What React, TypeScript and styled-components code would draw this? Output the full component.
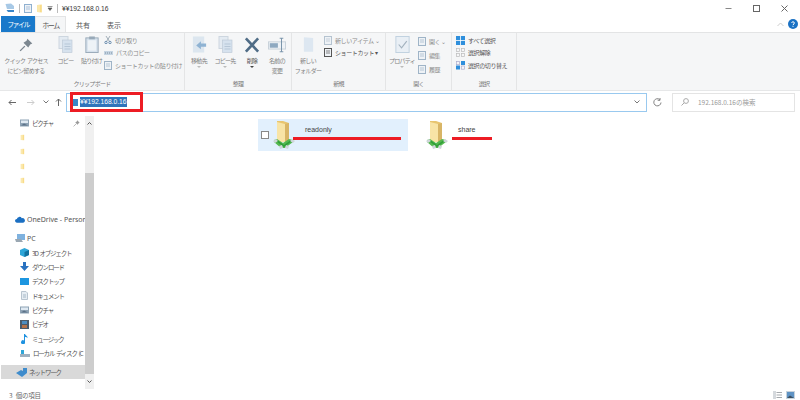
import React, { FC } from 'react';
import styled, { createGlobalStyle } from 'styled-components';

const GlobalStyle = createGlobalStyle`
  html, body { margin: 0; padding: 0; background: #fff; }
  body { font-family: "Noto Sans CJK JP", "Liberation Sans", sans-serif; overflow: hidden; }
  svg { flex: none; }
`;

const Win = styled.div`
  width: 800px;
  height: 400px;
  display: flex;
  flex-direction: column;
  position: relative;
  overflow: hidden;
  color: #444;
`;

const TitleBar = styled.div`
  height: 16px;
  flex: none;
  display: flex;
  align-items: center;
  padding-left: 5px;
  gap: 4px;
  font-size: 8px;
  color: #333;
`;
const TitleText = styled.span`
  font-family: "Liberation Sans", "Noto Sans CJK JP", sans-serif;
  font-size: 6.7px;
`;
const Sep = styled.span`
  width: 1px;
  height: 9px;
  background: #bbb;
`;
const WinButtons = styled.div`
  margin-left: auto;
  display: flex;
  gap: 21px;
  padding-right: 12px;
  align-items: center;
`;

const TabRow = styled.div`
  height: 16px;
  flex: none;
  display: flex;
  align-items: stretch;
`;
const FileTab = styled.div`
  width: 34px;
  margin-left: 1px;
  background: #1979ca;
  color: #fff;
  font-size: 7px;
  letter-spacing: -1.6px;
  display: flex;
  align-items: center;
  justify-content: center;
`;
const Tab = styled.div<{ $active?: boolean; $w: number; $narrow?: boolean }>`
  width: ${p => p.$w}px;
  font-size: 7px;
  letter-spacing: ${p => (p.$narrow ? '-1.4px' : '0')};
  display: flex;
  align-items: center;
  justify-content: center;
  color: #555;
  background: ${p => (p.$active ? '#f5f6f7' : 'transparent')};
  border: 1px solid ${p => (p.$active ? '#e3e4e5' : 'transparent')};
  border-bottom: none;
  box-sizing: border-box;
`;
const TabRight = styled.div`
  margin-left: auto;
  display: flex;
  align-items: center;
  gap: 4px;
  padding-right: 2px;
`;

const Ribbon = styled.div`
  height: 59px;
  flex: none;
  background: #f5f6f7;
  border-top: 1px solid #e3e4e5;
  border-bottom: 1px solid #e6e7e8;
  display: flex;
  box-sizing: border-box;
`;
const Group = styled.div<{ $w: number }>`
  width: ${p => p.$w}px;
  flex: none;
  border-right: 1px solid #e4e5e6;
  display: flex;
  flex-direction: column;
  box-sizing: border-box;
`;
const GroupBody = styled.div`
  flex: 1;
  display: flex;
  min-height: 0;
  padding-top: 2px;
`;
const GroupLabel = styled.div`
  height: 12px;
  font-size: 6px;
  letter-spacing: -0.7px;
  line-height: 12px;
  text-align: center;
  color: #777;
`;
const BigButton = styled.div<{ $w: number; $dark?: boolean }>`
  width: ${p => p.$w}px;
  flex: none;
  padding-top: 1px;
  display: flex;
  flex-direction: column;
  align-items: center;
  font-size: 6px;
  letter-spacing: -0.7px;
  word-spacing: 1px;
  line-height: 9.5px;
  text-align: center;
  color: ${p => (p.$dark ? '#555' : '#808080')};
  gap: 3px;
  white-space: nowrap;
`;
const IconSlot = styled.div`
  height: 17px;
  flex: none;
  display: flex;
  align-items: center;
  justify-content: center;
`;
const Caret = styled.span<{ $dark?: boolean }>`
  width: 0;
  height: 0;
  margin-top: -3px;
  border-left: 2px solid transparent;
  border-right: 2px solid transparent;
  border-top: 2px solid ${p => (p.$dark ? '#444' : '#bbb')};
`;
const SmallColumn = styled.div<{ $gap?: number; $top?: number; $left?: number }>`
  display: flex;
  flex-direction: column;
  gap: ${p => p.$gap ?? 2.5}px;
  padding-top: ${p => p.$top ?? 0}px;
  padding-left: ${p => p.$left ?? 0}px;
`;
const SmallButton = styled.div<{ $dark?: boolean }>`
  height: 10px;
  display: flex;
  align-items: center;
  gap: 3px;
  font-size: 6px;
  letter-spacing: -0.4px;
  white-space: nowrap;
  color: ${p => (p.$dark ? '#555' : '#8a8a8a')};
`;

const AddressRow = styled.div`
  height: 22px;
  flex: none;
  display: flex;
  align-items: center;
  padding-left: 8px;
`;
const NavIcons = styled.div`
  width: 58px;
  flex: none;
  display: grid;
  grid-template-columns: 19px 16px 12px auto;
  align-items: center;
`;
const AddressBox = styled.div`
  width: 581px;
  height: 19px;
  flex: none;
  box-sizing: border-box;
  border: 1px solid #99c9ef;
  display: flex;
  align-items: center;
  padding: 0 6px;
  gap: 2px;
`;
const AddressText = styled.span`
  background: #2f74bb;
  color: #fff;
  font-family: "Liberation Sans", sans-serif;
  font-size: 6.7px;
  line-height: 10px;
`;
const RefreshBox = styled.div`
  width: 24px;
  flex: none;
  box-sizing: border-box;
  padding-right: 4px;
  display: flex;
  justify-content: center;
`;
const SearchBox = styled.div`
  width: 123px;
  height: 19px;
  flex: none;
  margin-left: 1px;
  box-sizing: border-box;
  border: 1px solid #e4e4e4;
  display: flex;
  align-items: center;
  padding-left: 8px;
  gap: 9px;
  font-size: 6.5px;
  color: #9a9a9a;
`;

const Body = styled.div`
  flex: 1;
  min-height: 0;
  display: flex;
  padding-top: 3px;
`;
const Sidebar = styled.div`
  width: 85px;
  flex: none;
  overflow: hidden;
  display: flex;
  flex-direction: column;
`;
const NavItem = styled.div<{ $depth: number; $selected?: boolean; $latin?: boolean }>`
  height: 14.4px;
  flex: none;
  display: flex;
  align-items: center;
  gap: ${p => (p.$depth ? 3 : 2)}px;
  padding-left: ${p => (p.$depth ? 20 : 15)}px;
  margin-left: ${p => (p.$selected ? 1 : 0)}px;
  font-family: ${p => (p.$latin ? '"Noto Sans", sans-serif' : 'inherit')};
  font-size: ${p => (p.$latin ? 7 : 6.5)}px;
  letter-spacing: ${p => (p.$latin ? '0' : '-1.2px')};
  word-spacing: ${p => (p.$latin ? '0' : '1.5px')};
  color: #555;
  white-space: nowrap;
  background: ${p => (p.$selected ? '#d9d9d9' : 'transparent')};
`;
const NavGap = styled.div<{ $h: number }>`
  height: ${p => p.$h}px;
  flex: none;
`;
const PinIcon = styled.span`
  margin-left: auto;
  margin-right: 5px;
  display: flex;
`;
const ScrollBar = styled.div`
  width: 9px;
  flex: none;
  background: #f0f0f0;
  display: flex;
  flex-direction: column;
  align-items: center;
`;
const ScrollCap = styled.div`
  height: 15px;
  flex: none;
  display: flex;
  align-items: center;
  justify-content: center;
`;
const ScrollTrack = styled.div`
  flex: 1;
  width: 100%;
  display: flex;
  flex-direction: column;
`;
const ScrollThumb = styled.div`
  flex: 1;
  margin-top: 42px;
  background: #cdcdcd;
`;

const Content = styled.div`
  flex: 1;
  display: flex;
  align-items: flex-start;
  padding: 3px 0 0 164px;
`;
const ShareItem = styled.div<{ $selected?: boolean; $w: number; $inset?: number }>`
  width: ${p => p.$w}px;
  height: 32px;
  flex: none;
  box-sizing: border-box;
  padding-left: ${p => p.$inset ?? 0}px;
  display: flex;
  align-items: center;
  position: relative;
  background: ${p => (p.$selected ? '#e2f0fd' : 'transparent')};
`;
const CheckBox = styled.span`
  width: 8px;
  height: 8px;
  flex: none;
  margin: 0 4px 0 3px;
  box-sizing: border-box;
  border: 1px solid #888;
  background: #fff;
`;
const ShareLabel = styled.span`
  font-family: "Liberation Sans", sans-serif;
  font-size: 7px;
  color: #444;
  align-self: flex-start;
  margin: 7px 0 0 10px;
`;
const RedUnderline = styled.div<{ $left: number; $w: number }>`
  position: absolute;
  left: ${p => p.$left}px;
  top: 18px;
  width: ${p => p.$w}px;
  height: 3px;
  background: #ed1c24;
`;

const StatusBar = styled.div`
  height: 11px;
  flex: none;
  display: flex;
  align-items: center;
  padding: 0 5px 0 9px;
  font-size: 6.5px;
  letter-spacing: -0.2px;
  word-spacing: 2px;
  color: #666;
`;
const ViewIcons = styled.div`
  margin-left: auto;
  display: flex;
  align-items: center;
  gap: 4px;
`;

const RedMark = styled.div`
  position: absolute;
  left: 70px;
  top: 92px;
  width: 73px;
  height: 20px;
  box-sizing: border-box;
  border: 3px solid #ed1c24;
`;

const Folder: FC<{ size?: number }> = ({ size = 9 }) => (
  <svg width={size} height={size + 2} viewBox="0 0 9 11">
    <path d="M1.5 1 L7.5 0.5 V10.5 L1.5 10 Z" fill="#f8dc8a" />
    <path d="M1.5 1 L5 1 V10 H1.5 Z" fill="#fbe9ae" />
  </svg>
);

const NetFolder: FC = () => (
  <svg width="22" height="30" viewBox="0 0 22 30">
    <path d="M4 1 H10 L16 3 V21 H4 Z" fill="#e8c56f" />
    <path d="M4 2 L12 4 V22 H4 Z" fill="#f8e4a6" />
    <path d="M12 4 L16 3 V21 L12 22 Z" fill="#d8b566" />
    <path d="M1 20 L4 19 L10 23 L16 19 L20 20 L20 22 L12 28 L8 28 L1 22 Z" fill="#55b84f" />
    <path d="M4 20 L11 25 L18 20 L19 21 L11 27 L3 21 Z" fill="#2f9e38" />
    <path d="M0 21 L3 19 L5 21 L2 23 Z" fill="#cfd6da" />
    <path d="M19 19 L22 21 L20 23 L17 21 Z" fill="#cfd6da" />
    <path d="M6 26 L9 25 L10 28 L7 29 Z" fill="#cfd6da" />
    <path d="M13 25 L16 26 L15 29 L12 28 Z" fill="#cfd6da" />
  </svg>
);

const Pin: FC<{ size?: number; color?: string }> = ({ size = 7, color = '#9a9a9a' }) => (
  <svg width={size} height={size} viewBox="0 0 10 10">
    <path d="M6 0.5 L9.5 4 L8 4.6 L6.6 6.8 L3.2 3.4 L5.4 2 Z" fill={color} />
    <path d="M4.2 5.8 L0.8 9.2" stroke={color} strokeWidth="1" />
  </svg>
);

const Doc: FC = () => (
  <svg width="15" height="17" viewBox="0 0 14 17">
    <rect x="0.5" y="0.5" width="9" height="12" fill="#e4ebf2" stroke="#cdd6df" />
    <rect x="4" y="4" width="9.5" height="12.5" fill="#d6e2ee" stroke="#b9c7d4" strokeWidth="0.6" />
    <path d="M6 8H12M6 10.5H12M6 13H12" stroke="#a9bccd" strokeWidth="0.7" />
  </svg>
);

const Clipboard: FC = () => (
  <svg width="14" height="17" viewBox="0 0 14 18">
    <rect x="0.5" y="2" width="13" height="15.5" fill="#d5e1ec" stroke="#98a9b8" />
    <rect x="2.5" y="4.5" width="9" height="11" fill="#eef3f7" />
    <rect x="4" y="0.5" width="6" height="3" fill="#98a9b8" />
  </svg>
);

const Mini: FC<{ color?: string; kind?: 'cut' | 'bar' | 'doc' | 'grid' | 'dots' | 'swap' }> = ({ color = '#9fb4c7', kind = 'doc' }) => {
  if (kind === 'cut') {
    return (
      <svg width="8" height="8" viewBox="0 0 8 8">
        <path d="M2 0 L5.5 5.5M6 0 L2.5 5.5" stroke="#9aa7b2" strokeWidth="0.9" />
        <circle cx="2" cy="6.5" r="1.2" fill="none" stroke="#6d8fb0" />
        <circle cx="6" cy="6.5" r="1.2" fill="none" stroke="#6d8fb0" />
      </svg>
    );
  }
  if (kind === 'bar') {
    return (
      <svg width="9" height="8" viewBox="0 0 9 8">
        <rect x="0" y="2" width="9" height="4" fill="#c5d4e2" />
        <path d="M1 4H8" stroke="#7d8f9f" strokeDasharray="1 1" />
      </svg>
    );
  }
  if (kind === 'grid') {
    return (
      <svg width="9" height="9" viewBox="0 0 9 9">
        <rect width="9" height="9" fill="#2f8fdc" />
        <path d="M4.5 0V9M0 4.5H9" stroke="#fff" strokeWidth="0.8" />
      </svg>
    );
  }
  if (kind === 'dots') {
    return (
      <svg width="9" height="9" viewBox="0 0 9 9">
        <rect x="0.5" y="0.5" width="3" height="3" fill="none" stroke="#bbb" strokeWidth="0.7" />
        <rect x="5.5" y="0.5" width="3" height="3" fill="none" stroke="#bbb" strokeWidth="0.7" />
        <rect x="0.5" y="5.5" width="3" height="3" fill="none" stroke="#bbb" strokeWidth="0.7" />
        <rect x="5.5" y="5.5" width="3" height="3" fill="none" stroke="#bbb" strokeWidth="0.7" />
      </svg>
    );
  }
  if (kind === 'swap') {
    return (
      <svg width="9" height="9" viewBox="0 0 9 9">
        <rect x="0" y="4.5" width="4" height="4" fill="#2f8fdc" />
        <rect x="5" y="0" width="4" height="4" fill="#2f8fdc" />
        <rect x="5.3" y="5" width="3.2" height="3.2" fill="none" stroke="#aac" strokeWidth="0.7" />
        <rect x="0.3" y="0.5" width="3.2" height="3.2" fill="none" stroke="#aac" strokeWidth="0.7" />
      </svg>
    );
  }
  return (
    <svg width="8" height="9" viewBox="0 0 8 9">
      <rect x="0.5" y="0.5" width="7" height="8" fill="#eef2f6" stroke={color} />
      <path d="M2 3H6M2 5H6" stroke={color} strokeWidth="0.7" />
    </svg>
  );
};

const PictureIcon: FC = () => (
  <svg width="9" height="8" viewBox="0 0 9 8">
    <rect width="9" height="7" y="0.5" fill="#8ea3b5" />
    <rect x="1" y="1.5" width="7" height="2.5" fill="#dfe9f2" />
    <path d="M1 6.5L4 4.5L8 6.5Z" fill="#5b7288" />
  </svg>
);

const App: FC = () => (
  <>
    <GlobalStyle />
    <Win>
      <TitleBar>
        <svg width="10" height="10" viewBox="0 0 10 10">
          <path d="M0.5 1 L6 0.5 L9 3 V6 H2 Z" fill="#a8c9e6" />
          <path d="M1.5 7 H9 V9 H3 Z" fill="#3a86c8" />
        </svg>
        <Sep />
        <Mini color="#8fb0d0" />
        <Folder size={7} />
        <svg width="6" height="5" viewBox="0 0 6 5"><path d="M0.5 0.5H5.5M1 2L3 4.5L5 2Z" stroke="#555" strokeWidth="0.6" fill="#555" /></svg>
        <Sep />
        <TitleText>¥¥192.168.0.16</TitleText>
        <WinButtons>
          <svg width="7" height="7" viewBox="0 0 7 7"><path d="M0.5 3.5H6.5" stroke="#888" /></svg>
          <svg width="7" height="7" viewBox="0 0 7 7"><rect x="0.5" y="0.5" width="6" height="6" fill="none" stroke="#666" /></svg>
          <svg width="7" height="7" viewBox="0 0 7 7"><path d="M0.5 0.5L6.5 6.5M6.5 0.5L0.5 6.5" stroke="#666" /></svg>
        </WinButtons>
      </TitleBar>
      <TabRow>
        <FileTab>ファイル</FileTab>
        <Tab $active $w={31} $narrow>ホーム</Tab>
        <Tab $w={34}>共有</Tab>
        <Tab $w={28}>表示</Tab>
        <TabRight>
          <svg width="7" height="5" viewBox="0 0 7 5"><path d="M0.5 4L3.5 1L6.5 4" fill="none" stroke="#ccc" /></svg>
          <svg width="10" height="10" viewBox="0 0 10 10">
            <circle cx="5" cy="5" r="5" fill="#1b72c4" />
            <path d="M3.6 3.8C3.8 2.4 6.4 2.5 6.4 4C6.4 5 5 5 5 6.2M5 7.2V8" fill="none" stroke="#fff" strokeWidth="1" />
          </svg>
        </TabRight>
      </TabRow>
      <Ribbon>
        <Group $w={185}>
          <GroupBody>
            <BigButton $w={52}>
              <IconSlot><Pin size={14} color="#7c8790" /></IconSlot>
              <span>クイック アクセス<br />にピン留めする</span>
            </BigButton>
            <BigButton $w={27}>
              <IconSlot><Doc /></IconSlot>
              <span>コピー</span>
            </BigButton>
            <BigButton $w={25}>
              <IconSlot><Clipboard /></IconSlot>
              <span>貼り付け</span>
            </BigButton>
            <SmallColumn>
              <SmallButton><Mini kind="cut" />切り取り</SmallButton>
              <SmallButton><Mini kind="bar" />パスのコピー</SmallButton>
              <SmallButton><Mini />ショートカットの貼り付け</SmallButton>
            </SmallColumn>
          </GroupBody>
          <GroupLabel>クリップボード</GroupLabel>
        </Group>
        <Group $w={107}>
          <GroupBody>
            <BigButton $w={28}>
              <IconSlot>
                <svg width="15" height="17" viewBox="0 0 15 18">
                  <rect x="0.5" y="0.5" width="12" height="17" fill="#dce6ef" />
                  <path d="M14.5 8H9V5.5L4 10L9 14V11.5H14.5Z" fill="#8fb3d3" />
                </svg>
              </IconSlot>
              <span>移動先</span>
              <Caret />
            </BigButton>
            <BigButton $w={24}>
              <IconSlot><Doc /></IconSlot>
              <span>コピー先</span>
              <Caret />
            </BigButton>
            <BigButton $w={30} $dark>
              <IconSlot>
                <svg width="16" height="16" viewBox="0 0 16 17">
                  <path d="M1.5 1.5L14.5 15.5M14.5 1.5L1.5 15.5" stroke="#4f6c86" strokeWidth="2.8" />
                </svg>
              </IconSlot>
              <span>削除</span>
              <Caret $dark />
            </BigButton>
            <BigButton $w={20}>
              <IconSlot>
                <svg width="18" height="16" viewBox="0 0 20 17">
                  <rect x="0.5" y="5" width="19" height="8" fill="#eef2f6" stroke="#c5cfd8" />
                  <rect x="2" y="6.5" width="9" height="5" fill="#8ea9c0" />
                  <path d="M13 1H17M15 1V16M13 16H17" stroke="#6d8aa3" />
                </svg>
              </IconSlot>
              <span>名前の<br />変更</span>
            </BigButton>
          </GroupBody>
          <GroupLabel>整理</GroupLabel>
        </Group>
        <Group $w={94}>
          <GroupBody>
            <BigButton $w={32}>
              <IconSlot>
                <svg width="11" height="17" viewBox="0 0 12 18">
                  <path d="M1 1L11 2V17H1Z" fill="#dde7f1" />
                </svg>
              </IconSlot>
              <span>新しい<br />フォルダー</span>
            </BigButton>
            <SmallColumn>
              <SmallButton><Mini color="#b5c3d0" />新しいアイテム ⌄</SmallButton>
              <SmallButton $dark><Mini color="#555" />ショートカット ▾</SmallButton>
            </SmallColumn>
          </GroupBody>
          <GroupLabel>新規</GroupLabel>
        </Group>
        <Group $w={66}>
          <GroupBody>
            <BigButton $w={32}>
              <IconSlot>
                <svg width="15" height="17" viewBox="0 0 15 18">
                  <rect x="0.5" y="0.5" width="14" height="17" fill="#e9eff5" stroke="#bfd0df" />
                  <path d="M3.5 9L6.5 12.5L12 5.5" fill="none" stroke="#a3b2be" strokeWidth="1.2" />
                </svg>
              </IconSlot>
              <span>プロパティ</span>
              <Caret />
            </BigButton>
            <SmallColumn $gap={4} $top={1}>
              <SmallButton><Mini />開く ⌄</SmallButton>
              <SmallButton><Mini />編集</SmallButton>
              <SmallButton><Mini />履歴</SmallButton>
            </SmallColumn>
          </GroupBody>
          <GroupLabel>開く</GroupLabel>
        </Group>
        <Group $w={65}>
          <GroupBody>
            <SmallColumn $left={4}>
              <SmallButton $dark><Mini kind="grid" />すべて選択</SmallButton>
              <SmallButton $dark><Mini kind="dots" />選択解除</SmallButton>
              <SmallButton $dark><Mini kind="swap" />選択の切り替え</SmallButton>
            </SmallColumn>
          </GroupBody>
          <GroupLabel>選択</GroupLabel>
        </Group>
      </Ribbon>
      <AddressRow>
        <NavIcons>
          <svg width="8" height="7" viewBox="0 0 8 7"><path d="M8 3.5H1M3.5 1L1 3.5L3.5 6" fill="none" stroke="#666" /></svg>
          <svg width="8" height="7" viewBox="0 0 8 7"><path d="M0 3.5H7M4.5 1L7 3.5L4.5 6" fill="none" stroke="#ccc" /></svg>
          <svg width="6" height="4" viewBox="0 0 6 4"><path d="M0.5 0.5L3 3L5.5 0.5" fill="none" stroke="#777" /></svg>
          <svg width="7" height="8" viewBox="0 0 7 8"><path d="M3.5 8V1M1 3.5L3.5 1L6 3.5" fill="none" stroke="#666" /></svg>
        </NavIcons>
        <AddressBox>
          <svg width="5" height="7" viewBox="0 0 5 7"><rect width="5" height="7" fill="#3a86c8" /></svg>
          <AddressText>¥¥192.168.0.16</AddressText>
          <svg style={{ marginLeft: 'auto' }} width="6" height="4" viewBox="0 0 6 4"><path d="M0.5 0.5L3 3L5.5 0.5" fill="none" stroke="#777" /></svg>
        </AddressBox>
        <RefreshBox>
          <svg width="9" height="9" viewBox="0 0 9 9"><path d="M6.8 1.6A3.6 3.6 0 1 0 8 4.5M7 0V2.3H4.7" fill="none" stroke="#777" strokeWidth="0.9" /></svg>
        </RefreshBox>
        <SearchBox>
          <svg width="8" height="8" viewBox="0 0 8 8"><circle cx="5" cy="3" r="2.4" fill="none" stroke="#aaa" /><path d="M3.2 4.8L0.5 7.5" stroke="#aaa" /></svg>
          <span>192.168.0.16の検索</span>
        </SearchBox>
      </AddressRow>
      <Body>
        <Sidebar>
          <NavItem $depth={1}><PictureIcon />ピクチャ<PinIcon><Pin /></PinIcon></NavItem>
          <NavItem $depth={1}><Folder size={5} /></NavItem>
          <NavItem $depth={1}><Folder size={5} /></NavItem>
          <NavItem $depth={1}><Folder size={5} /></NavItem>
          <NavItem $depth={1}><Folder size={5} /></NavItem>
          <NavGap $h={24} />
          <NavItem $depth={0} $latin>
            <svg width="10" height="7" viewBox="0 0 11 7"><path d="M2 7A2 2 0 0 1 2 3A3 3 0 0 1 7.5 2A2.5 2.5 0 0 1 9 7Z" fill="#1b6fc2" /></svg>
            OneDrive - Person
          </NavItem>
          <NavGap $h={4.6} />
          <NavItem $depth={0} $latin>
            <svg width="10" height="9" viewBox="0 0 10 9"><rect x="2" y="0" width="8" height="6" fill="#7fb2df" /><path d="M0 5H6L8 8H1Z" fill="#9aa7b2" /></svg>
            PC
          </NavItem>
          <NavItem $depth={1}>
            <svg width="9" height="9" viewBox="0 0 9 9"><path d="M4.5 0L9 2V7L4.5 9L0 7V2Z" fill="#2ea6d8" /><path d="M4.5 4V9L9 7V2Z" fill="#12729f" /></svg>
            3D オブジェクト
          </NavItem>
          <NavItem $depth={1}>
            <svg width="9" height="9" viewBox="0 0 9 9"><path d="M3 0H6V4H9L4.5 9L0 4H3Z" fill="#2a72c0" /></svg>
            ダウンロード
          </NavItem>
          <NavItem $depth={1}>
            <svg width="9" height="7" viewBox="0 0 9 7"><rect width="9" height="7" fill="#1d96e0" /></svg>
            デスクトップ
          </NavItem>
          <NavItem $depth={1}>
            <svg width="9" height="9" viewBox="0 0 9 9"><path d="M1.5 0.5H6L7.5 2V8.5H1.5Z" fill="#e6edf3" stroke="#b9c5d0" /><path d="M3 4H6M3 6H6" stroke="#8ea3b5" strokeWidth="0.7" /></svg>
            ドキュメント
          </NavItem>
          <NavItem $depth={1}><PictureIcon />ピクチャ</NavItem>
          <NavItem $depth={1}>
            <svg width="9" height="9" viewBox="0 0 9 9"><rect width="9" height="9" fill="#4a5b6b" /><rect x="2" y="1" width="5" height="3" fill="#4d8dc0" /><rect x="2" y="5" width="5" height="3" fill="#b5734a" /></svg>
            ビデオ
          </NavItem>
          <NavItem $depth={1}>
            <svg width="9" height="10" viewBox="0 0 9 10"><path d="M4 0H5C5.5 2 8 2 7.5 4C7 3 6 3 5 3V8A2 2 0 1 1 4 6.5Z" fill="#1f92e0" /></svg>
            ミュージック
          </NavItem>
          <NavItem $depth={1}>
            <svg width="10" height="7" viewBox="0 0 10 7"><rect x="0" y="4" width="10" height="3" fill="#9fb0bf" /><rect x="1" y="0" width="3" height="4" fill="#2ea6d8" /></svg>
            ローカル ディスク (C
          </NavItem>
          <NavGap $h={4.6} />
          <NavItem $depth={0} $selected>
            <svg width="11" height="9" viewBox="0 0 11 9"><path d="M0 5L5 2L7 3V0H11V5L6 9Z" fill="#3f8ccc" /></svg>
            ネットワーク
          </NavItem>
        </Sidebar>
        <ScrollBar>
          <ScrollCap><svg width="5" height="3" viewBox="0 0 5 3"><path d="M0.5 2.5L2.5 0.5L4.5 2.5" fill="none" stroke="#555" /></svg></ScrollCap>
          <ScrollTrack><ScrollThumb /></ScrollTrack>
          <ScrollCap><svg width="5" height="3" viewBox="0 0 5 3"><path d="M0.5 0.5L2.5 2.5L4.5 0.5" fill="none" stroke="#555" /></svg></ScrollCap>
        </ScrollBar>
        <Content>
          <ShareItem $selected $w={150}>
            <CheckBox />
            <NetFolder />
            <ShareLabel>readonly</ShareLabel>
            <RedUnderline $left={35} $w={108} />
          </ShareItem>
          <ShareItem $w={150} $inset={18}>
            <NetFolder />
            <ShareLabel>share</ShareLabel>
            <RedUnderline $left={44} $w={40} />
          </ShareItem>
        </Content>
      </Body>
      <StatusBar>
        3 個の項目
        <ViewIcons>
          <svg width="9" height="8" viewBox="0 0 9 8"><rect width="3" height="8" fill="#d5d9dd" /><path d="M3.5 1.5H9M3.5 4H9M3.5 6.5H9" stroke="#a5a9ad" /></svg>
          <svg width="9" height="8" viewBox="0 0 9 8"><rect width="9" height="8" fill="#c9d3db" /><rect x="1" y="1" width="7" height="6" fill="#5f93c4" /><path d="M1 7L4 4.5L8 7Z" fill="#3c4f60" /></svg>
        </ViewIcons>
      </StatusBar>
      <RedMark />
    </Win>
  </>
);

export default App;
